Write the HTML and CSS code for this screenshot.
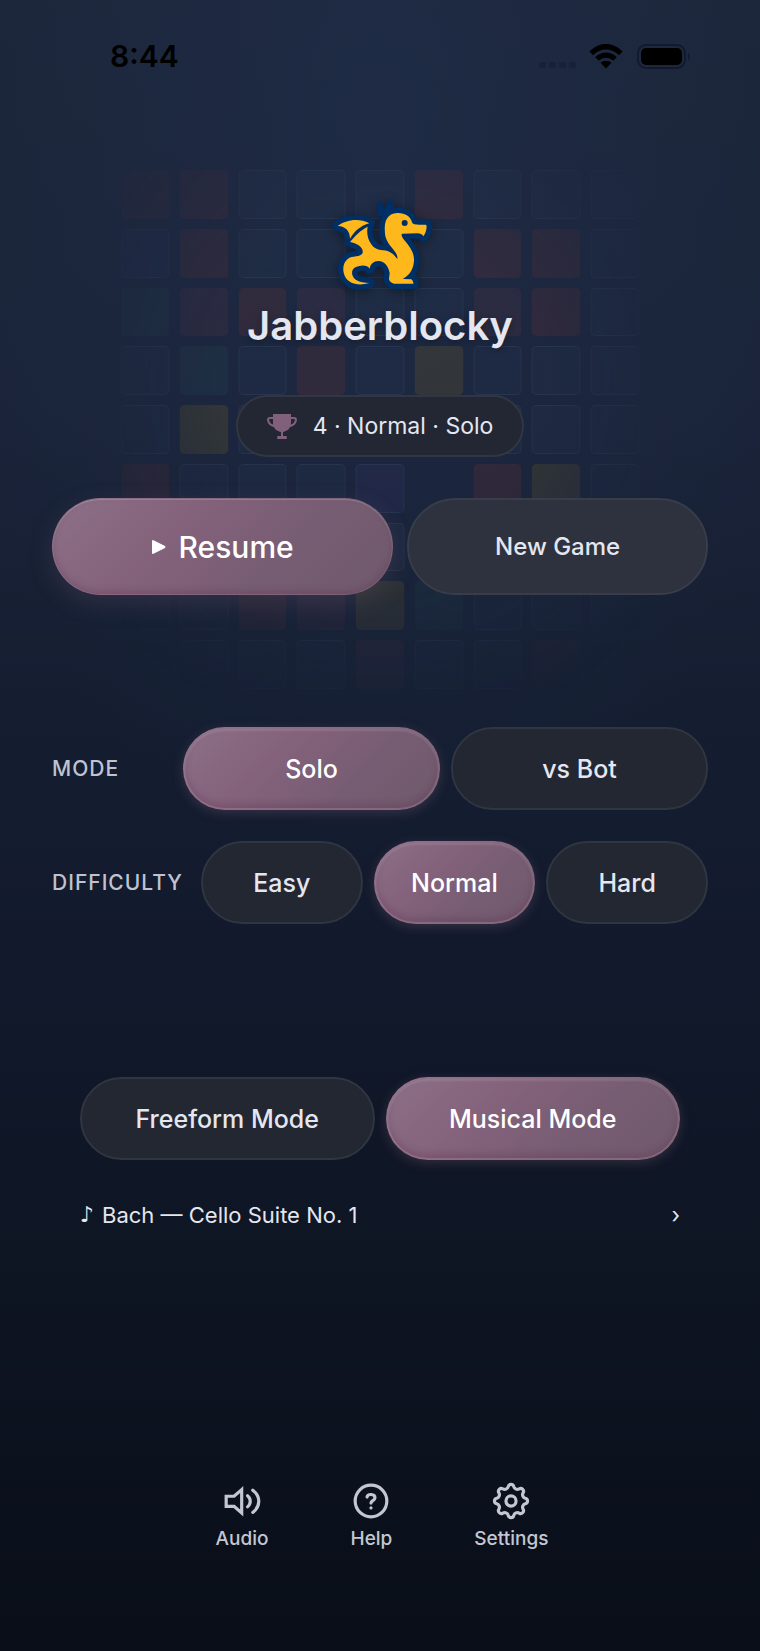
FILE: index.html
```
<!DOCTYPE html>
<html lang="en">

<head>
    <meta charset="UTF-8">
    <meta name="viewport" content="width=device-width, initial-scale=1">
    <title>Jabberblocky</title>
    <link rel="stylesheet" href="styles.css">
</head>

<body>
    <div class="board" id="board" aria-hidden="true"></div>

    <header class="status">
        <span class="time">8:44</span>
        <div class="status-icons">
            <svg class="signal" viewBox="0 0 38 8" width="38" height="8"><rect x="0" y="1" width="7" height="6" rx="2"/><rect x="10" y="1" width="7" height="6" rx="2"/><rect x="20" y="1" width="7" height="6" rx="2"/><rect x="30" y="1" width="7" height="6" rx="2"/></svg>
            <svg class="wifi" viewBox="0 0 34 25" width="34" height="25">
                <path d="M0.500 7.500C10-2.500 24-2.500 33.500 7.500L30 11.200C22.500 3.500 11.500 3.500 4 11.200Z"/>
                <path d="M6.200 13.200C12.500 7 21.500 7 27.800 13.200L24.200 16.800C20 12.800 14 12.800 9.800 16.800Z"/>
                <path d="M11.500 18.800C14.500 16 19.500 16 22.500 18.800L17 24.500Z"/>
            </svg>
            <svg class="battery" viewBox="0 0 54 25" width="54" height="25">
                <rect class="battery-case" x="1" y="1" width="47" height="23" rx="8"/>
                <rect x="4" y="4" width="41" height="17" rx="5"/>
                <path class="battery-tip" d="M51 8.500Q54 12.500 51 16.500Z"/>
            </svg>
        </div>
    </header>

    <main>
        <section class="hero">
            <svg class="dragon" viewBox="60 25 300 276" width="100" height="92">
                <g class="dragon-edge">
                    <path d="M204 80L207 32L224 60L242 28L254 68Z"/>
                    <use href="#wing"/>
                    <use href="#dragon-body"/>
                </g>
                <g class="dragon-fill">
                    <path id="wing" d="M83 109C105 92 145 83 178 101C152 108 133 125 120 147C120 124 107 110 83 109Z"/>
                    <path id="dragon-body" d="M262 70C284 69 302 80 306 98C309 106 324 106 348 105L350 109C350 122 346 132 340 140C336 133 331 131 322 131L276 132C272 137 278 145 287 156C303 176 313 192 312 212C311 239 298 258 278 268L304 269Q311 275 310 282L253 282Q239 279 237 268L239 250C235 230 224 214 205 214C191 215 182 221 179 237C174 227 158 226 148 229C130 232 124 242 127 256C132 272 148 279 178 280C152 288 123 286 108 266C95 244 98 220 113 208C126 196 153 204 158 189C161 173 140 160 120 157C137 137 150 123 173 111C169 131 174 151 184 164C190 174 199 179 211 181C235 181 249 190 262 208C266 187 234 172 226 140C222 112 221 72 262 70Z"/>
                </g>
                <circle class="dragon-eye" cx="284" cy="100" r="9"/>
            </svg>
            <h1>Jabberblocky</h1>
            <p class="best">
                <svg viewBox="0 0 30 25" width="30" height="25">
                    <path class="cup-handles" d="M8 4H3Q1 4 1 6Q2 12 9 12M22 4H27Q29 4 29 6Q28 12 21 12"/>
                    <path d="M6 0H24V8C24 14 21 17 16 18V22H19Q20 22 20 24Q20 25 19 25H11Q10 25 10 24Q10 22 11 22H14V18C9 17 6 14 6 8Z"/>
                </svg>
                4 · Normal · Solo
            </p>
        </section>

        <div class="actions">
            <button class="btn active resume">
                <svg viewBox="0 0 14 14" width="14" height="14"><path d="M0 1Q0 0 1 0L13 6Q14 7 13 8L1 14Q0 14 0 13Z"/></svg>
                Resume
            </button>
            <button class="btn new-game">New Game</button>
        </div>

        <section class="options">
            <div class="option" role="group" aria-labelledby="modeLabel">
                <span class="option-label" id="modeLabel">MODE</span>
                <button class="btn active" aria-pressed="true">Solo</button>
                <button class="btn" aria-pressed="false">vs Bot</button>
            </div>
            <div class="option" role="group" aria-labelledby="diffLabel">
                <span class="option-label" id="diffLabel">DIFFICULTY</span>
                <button class="btn" aria-pressed="false">Easy</button>
                <button class="btn active" aria-pressed="true">Normal</button>
                <button class="btn" aria-pressed="false">Hard</button>
            </div>
        </section>

        <section class="music">
            <div class="music-modes">
                <button class="btn" aria-pressed="false">Freeform Mode</button>
                <button class="btn active" aria-pressed="true">Musical Mode</button>
            </div>
            <button class="song">
                <span class="note">♪</span>
                <span>Bach — Cello Suite No. 1</span>
                <span class="chevron">›</span>
            </button>
        </section>
    </main>

    <nav>
        <button class="nav-item">
            <svg viewBox="0 0 24 24" width="38" height="38">
                <path stroke-linejoin="miter" d="M11.800 4.800L7 9H2V15.400H7L11.800 19.600Z"/>
                <path d="M15.500 8.700Q17.200 10.100 17.200 12.200Q17.200 14.300 15.500 15.700M18.800 5.200Q22.600 8 22.600 12.200Q22.600 16.400 18.800 19.200"/>
            </svg>
            Audio
        </button>
        <button class="nav-item">
            <svg viewBox="0 0 24 24" width="38" height="38">
                <circle cx="12" cy="12" r="10"/>
                <path d="M9.500 9.500C9.800 7.300 14.500 7.300 14.500 9.900C14.500 11.700 12 11.800 12 13.300M12 16.300V16.400"/>
            </svg>
            Help
        </button>
        <button class="nav-item">
            <svg viewBox="0 0 24 24" width="38" height="38">
                <path d="M10.240 2.970A1.800 1.800 0 0 1 13.760 2.970A2.300 2.300 0 0 0 17.140 4.370A1.800 1.800 0 0 1 19.630 6.860A2.300 2.300 0 0 0 21.030 10.240A1.800 1.800 0 0 1 21.030 13.760A2.300 2.300 0 0 0 19.630 17.140A1.800 1.800 0 0 1 17.140 19.630A2.300 2.300 0 0 0 13.760 21.030A1.800 1.800 0 0 1 10.240 21.030A2.300 2.300 0 0 0 6.860 19.630A1.800 1.800 0 0 1 4.370 17.140A2.300 2.300 0 0 0 2.970 13.760A1.800 1.800 0 0 1 2.970 10.240A2.300 2.300 0 0 0 4.370 6.860A1.800 1.800 0 0 1 6.860 4.370A2.300 2.300 0 0 0 10.240 2.970Z"/>
                <circle cx="12" cy="12" r="3.200"/>
            </svg>
            Settings
        </button>
    </nav>

    <script>
        // one letter per tile: r red, p plum, g green, y yellow, b blue, x blank, . empty
        var rows = [
            "rr...r...",
            "br....rr.",
            "gprp..pr.",
            ".g.r.y...",
            ".y.......",
            "r...bxry.",
            ".........",
            "..rpyg...",
            "....p..p."
        ];
        var board = document.getElementById('board');
        rows.join("").split("").forEach(function (c) {
            var tile = document.createElement('i');
            tile.className = c == "." ? "tile" : "tile " + c;
            board.appendChild(tile);
        });
    </script>
</body>

</html>
```
FILE: styles.css
```
*{
    box-sizing: border-box;
    font-family: Inter, "Liberation Sans", sans-serif;
}
body{
    position: relative;
    display: flex;
    flex-direction: column;
    min-height: 100vh;
    margin: 0;
    overflow-x: hidden;
    background:
        radial-gradient(ellipse 60% 45% at 50% 8%, rgba(36, 54, 92, 0.35), rgba(36, 54, 92, 0) 100%),
        linear-gradient(#1c2639 0%, #1a2338 25%, #151e31 43%, #12192c 58%, #0e1523 76%, #090e18 100%);
    color: #e4e6f0;
}
button{
    margin: 0;
    padding: 0;
    border: 0;
    background: none;
    color: inherit;
    cursor: pointer;
}

/* faded board behind the menu */
.board{
    position: absolute;
    top: 170px;
    left: 50%;
    z-index: -1;
    display: grid;
    grid-template-columns: repeat(9, 1fr);
    gap: 10px;
    width: 519px;
    transform: translateX(-50%);
    -webkit-mask-image: radial-gradient(circle at 50% 42%, black 40%, transparent 90%);
    mask-image: radial-gradient(circle at 50% 42%, black 40%, transparent 90%);
}
.tile{
    aspect-ratio: 1;
    border: 1px solid rgba(120, 150, 170, 0.1);
    border-radius: 5px;
    background: rgba(60, 85, 120, 0.08);
}
.r{
    border-color: transparent;
    background: rgba(130, 55, 50, 0.2);
}
.p{
    border-color: transparent;
    background: rgba(120, 60, 75, 0.16);
}
.g{
    border-color: transparent;
    background: rgba(45, 90, 85, 0.16);
}
.y{
    border-color: transparent;
    background: rgba(115, 100, 40, 0.25);
}
.b{
    background: rgba(70, 60, 130, 0.15);
}
.x{
    border-color: transparent;
    background: none;
}

/* status bar */
.status{
    display: flex;
    align-items: center;
    justify-content: space-between;
    height: 40px;
    margin: 36px 69px 0 110px;
    color: #000;
}
.time{
    font-size: 30px;
    font-weight: 600;
}
.status-icons{
    display: flex;
    align-items: center;
    gap: 12px;
}
.signal{
    align-self: flex-end;
    fill: #17213a;
}
.battery{
    margin-left: 2px;
}
.battery-case{
    fill: none;
    stroke: #121a2d;
    stroke-width: 2;
}
.battery-tip{
    fill: #121a2d;
}

main{
    padding: 0 52px;
}
.hero{
    display: flex;
    flex-direction: column;
    align-items: center;
    margin-top: 122px;
}
.dragon{
    overflow: visible;
    filter: drop-shadow(0 2px 6px rgba(0, 0, 0, 0.4));
}
.dragon-edge{
    fill: #002f65;
    stroke: #002f65;
    stroke-width: 32;
    stroke-linejoin: round;
}
.dragon-edge > path{
    stroke-width: 4;
}
.dragon-fill{
    fill: #ffb81c;
}
.dragon-eye{
    fill: #002f65;
}
h1{
    margin: 12px 0 0;
    font-size: 40px;
    font-weight: 600;
    line-height: 48px;
    text-shadow: 0 2px 6px rgba(0, 0, 0, 0.3);
}
.best{
    display: flex;
    align-items: center;
    gap: 16px;
    height: 62px;
    margin: 45px 0 0;
    padding: 0 29px;
    border: 2px solid #313742;
    border-radius: 31px;
    background: #232733;
    font-size: 23px;
}
.best svg{
    fill: #80607a;
}
.best .cup-handles{
    fill: none;
    stroke: #80607a;
    stroke-width: 2;
}

/* pill buttons */
.btn{
    flex: 1 1 0;
    height: 83px;
    border: 2px solid #303641;
    border-radius: 48px;
    background: #232732;
    font-size: 25px;
    font-weight: 500;
}
.btn.active{
    border-color: rgba(160, 125, 150, 0.35);
    background: linear-gradient(135deg, #8c7088 0%, #84627b 35%, #775d73 65%, #705a6c 100%) border-box;
    color: #fff;
    box-shadow: 0 3px 12px rgba(132, 98, 123, 0.3), inset 0 2px 2px rgba(255, 255, 255, 0.12), inset 0 -4px 6px rgba(90, 40, 75, 0.25);
}
.actions{
    display: flex;
    gap: 14px;
    margin-top: 41px;
}
.actions .btn{
    height: 97px;
    border-radius: 49px;
}
.btn.resume{
    display: flex;
    flex-grow: 8;
    align-items: center;
    justify-content: center;
    gap: 13px;
    border-width: 1px;
    border-color: rgba(160, 125, 150, 0.2);
    font-size: 30px;
    box-shadow: 0 8px 24px rgba(132, 98, 123, 0.22), inset 0 1px 1px rgba(255, 255, 255, 0.2), inset 0 -3px 6px rgba(90, 40, 75, 0.25);
}
.resume svg{
    fill: #fff;
}
.btn.new-game{
    flex-grow: 7;
    border-color: #373d49;
    background: #2e323e;
    font-size: 24px;
}

.options{
    display: flex;
    flex-direction: column;
    gap: 31px;
    margin-top: 132px;
}
.option{
    display: flex;
    align-items: center;
    gap: 11px;
}
.option-label{
    min-width: 113px;
    margin-right: 7px;
    color: #bfc3d1;
    font-size: 21px;
    font-weight: 500;
    letter-spacing: 1px;
}

.music{
    max-width: 600px;
    margin: 153px auto 0;
}
.music-modes{
    display: flex;
    gap: 11px;
}
.song{
    display: flex;
    align-items: center;
    gap: 8px;
    width: 100%;
    margin-top: 39px;
    font-size: 22px;
    line-height: 32px;
    text-align: left;
}
.note{
    font-family: "DejaVu Sans", sans-serif;
}
.chevron{
    margin-left: auto;
}

nav{
    display: flex;
    justify-content: center;
    gap: 82px;
    margin-top: auto;
    padding: 40px 0 100px 4px;
}
.nav-item{
    display: flex;
    flex-direction: column;
    align-items: center;
    gap: 7px;
    color: #c4c7d2;
    font-size: 19px;
    font-weight: 500;
    line-height: 24px;
}
.nav-item svg{
    fill: none;
    stroke: currentColor;
    stroke-width: 2;
    stroke-linecap: round;
    stroke-linejoin: round;
}
```
